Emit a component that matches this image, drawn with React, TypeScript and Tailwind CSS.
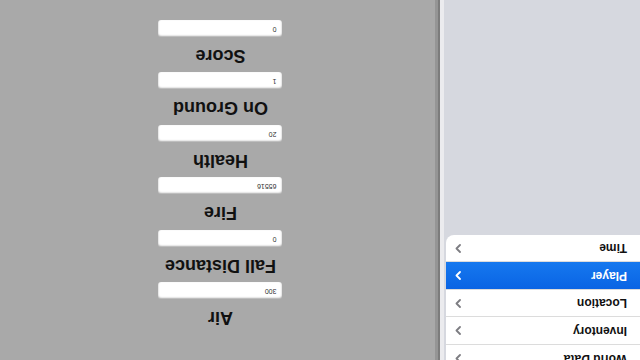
import React from 'react';

// The reference is shown upside down, so the whole page is laid out upright and turned 180deg.

interface StatField {
  label: string;
  value: string;
}

const stats: StatField[] = [
  { label: "Air", value: "300" },
  { label: "Fall Distance", value: "0" },
  { label: "Fire", value: "65516" },
  { label: "Health", value: "20" },
  { label: "On Ground", value: "1" },
  { label: "Score", value: "0" },
];

const menu = ["World Data", "Inventory", "Location", "Player", "Time"];

const Chevron: React.FC<{ color: string }> = ({ color }) => (
  <svg width="6" height="9" viewBox="0 0 6 9" fill="none">
    <polyline points="1,1 4.5,4.5 1,8" stroke={color} strokeWidth="1.8" strokeLinecap="round" strokeLinejoin="round" />
  </svg>
);

const App: React.FC = () => {
  return (
    <div
      className="w-[640px] h-[360px] overflow-hidden rotate-180 flex bg-[#a9a9a9]"
      style={{ fontFamily: '"Liberation Sans", Arial, sans-serif' }}
    >
      {/* Sidebar */}
      <div className="w-[196px] h-full bg-[#d6d8df] shrink-0 pr-[2px]">
        <div className="mt-[-12.5px] bg-white rounded-br-[8px] overflow-hidden">
          {menu.map((item, i) => {
            const selected = item === "Player";
            return (
              <div
                key={item}
                className={`h-[27.5px] flex items-center justify-between pl-[13px] pr-[9px] ${
                  i > 0 ? "border-t border-[#dcdcdc]" : ""
                } ${selected ? "bg-gradient-to-b from-[#0a64e4] to-[#1678ef] border-[#0a5bd0]" : ""}`}
              >
                <span className={`text-[12px] font-bold ${selected ? "text-white" : "text-[#111]"}`}>{item}</span>
                <Chevron color={selected ? "#ffffff" : "#7d7d82"} />
              </div>
            );
          })}
        </div>
      </div>

      {/* Divider */}
      <div className="w-[4px] h-full bg-[#ebebee] shrink-0" />
      <div className="w-[2px] h-full bg-[#7c7c7c] shrink-0" />
      <div className="w-[3px] h-full bg-[#959595] shrink-0" />

      {/* Content */}
      <div className="flex-1 flex flex-col items-center pt-[32.6px] pr-[6px] gap-[7.5px]">
        {stats.map((s) => (
          <div key={s.label} className="flex flex-col items-center">
            <div className="h-[18px] leading-[18px] text-[18px] font-bold text-[#111]">{s.label}</div>
            <div className="mt-[10px] w-[124px] h-[17px] bg-white rounded-[3px] shadow-[inset_0_1px_2px_rgba(0,0,0,0.35)] flex items-center pl-[6px]">
              <span className="text-[7px] text-[#333]">{s.value}</span>
            </div>
          </div>
        ))}
      </div>
    </div>
  );
};

export default App;
